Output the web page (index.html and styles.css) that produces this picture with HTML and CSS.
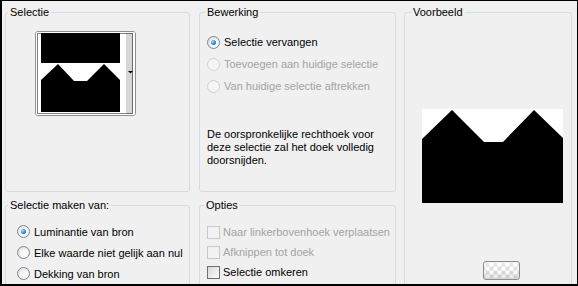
FILE: index.html
```html
<!DOCTYPE html>
<html>
<head>
<meta charset="utf-8">
<link rel="stylesheet" href="styles.css">
</head>
<body>
<div class="frame">
  <div class="layout">
    <fieldset class="group g-sel">
      <legend>Selectie</legend>
      <div class="thumb">
        <svg width="99" height="83" viewBox="0 0 99 83">
          <rect x="0" y="0" width="99" height="83" fill="#fff"/>
          <rect x="90" y="1" width="7" height="81" fill="#d6d6d6"/>
          <rect x="5" y="1" width="79" height="30" fill="#000"/>
          <polygon points="5,48 22,32 38,49 51,49 68,32 84,48 84,80 5,80" fill="#000"/>
          <polygon points="92,39 97,39 94.5,41.5" fill="#000"/>
          <rect x="1.5" y="1.5" width="95" height="80" fill="none" stroke="#000" stroke-width="1" stroke-dasharray="1 1"/>
        </svg>
      </div>
    </fieldset>

    <fieldset class="group g-edit">
      <legend>Bewerking</legend>
      <div class="options opts-edit">
        <div class="opt"><span class="radio checked"></span>Selectie vervangen</div>
        <div class="opt disabled"><span class="radio"></span>Toevoegen aan huidige selectie</div>
        <div class="opt disabled"><span class="radio"></span>Van huidige selectie aftrekken</div>
      </div>
      <p class="note">De oorspronkelijke rechthoek voor<br>deze selectie zal het doek volledig<br>doorsnijden.</p>
    </fieldset>

    <fieldset class="group g-preview">
      <legend>Voorbeeld</legend>
      <div class="preview">
        <svg width="141" height="94" viewBox="0 0 141 94">
          <rect x="0" y="0" width="141" height="94" fill="#fff"/>
          <polygon points="0,30 30,1 62,33 81,33 112,1 141,29 141,94 0,94" fill="#000"/>
        </svg>
      </div>
      <div class="bg-button"></div>
    </fieldset>

    <fieldset class="group g-source">
      <legend>Selectie maken van:</legend>
      <div class="options opts-source">
        <div class="opt"><span class="radio checked"></span>Luminantie van bron</div>
        <div class="opt"><span class="radio"></span>Elke waarde niet gelijk aan nul</div>
        <div class="opt"><span class="radio"></span>Dekking van bron</div>
      </div>
    </fieldset>

    <fieldset class="group g-opts">
      <legend>Opties</legend>
      <div class="options opts-check">
        <div class="opt disabled"><span class="check"></span>Naar linkerbovenhoek verplaatsen</div>
        <div class="opt disabled"><span class="check"></span>Afknippen tot doek</div>
        <div class="opt"><span class="check"></span>Selectie omkeren</div>
      </div>
    </fieldset>
  </div>
</div>
</body>
</html>
```

FILE: styles.css
```css
* { box-sizing: border-box; }

html, body {
  margin: 0;
  padding: 0;
  background: #f0f0f0;
}

body {
  font-family: "Liberation Sans", Arial, sans-serif;
  font-size: 11px;
  color: #000;
}

.frame {
  width: 578px;
  height: 286px;
  border-style: solid;
  border-color: #000;
  border-width: 1px 1px 2px 2px;
  padding: 5px 0 0 3px;
  overflow: hidden;
  background: #f0f0f0;
}

.layout {
  display: grid;
  grid-template-columns: 186px 197px 168px;
  grid-template-rows: 186px 120px;
  column-gap: 8px;
  row-gap: 7px;
}

.group {
  margin: 0;
  padding: 0;
  border: 1px solid #d2dce3;
  border-radius: 3px;
  min-width: 0;
}

.group legend {
  padding: 0 2px;
  line-height: 13px;
  font-size: 11px;
}

.g-sel { grid-column: 1; grid-row: 1; width: 185px; }
.g-sel legend { margin-left: 2px; }

.g-edit { grid-column: 2; grid-row: 1; }
.g-edit legend { margin-left: 5px; }

.g-preview { grid-column: 3; grid-row: 1 / span 2; }
.g-preview legend { margin-left: 6px; }

.g-source { grid-column: 1; grid-row: 2; width: 185px; }
.g-source legend { margin-left: 2px; }

.g-opts { grid-column: 2; grid-row: 2; }
.g-opts legend { margin-left: 4px; }

/* thumbnail list */
.thumb {
  margin: 12px 0 0 29px;
  width: 101px;
  height: 85px;
  border: 1px solid #8e8f8f;
  border-radius: 3px;
  background: #fff;
  overflow: hidden;
}
.thumb svg { display: block; }

/* options */
.options { display: flex; flex-direction: column; }
.opts-edit { padding: 12px 0 0 7px; }
.opts-edit .opt { height: 22px; }
.opts-source { padding: 9px 0 0 11px; }
.opts-source .opt { height: 21px; }
.opts-check { padding: 10px 0 0 7px; }
.opts-check .opt { height: 20px; gap: 3px; }

.opt {
  display: flex;
  align-items: center;
  gap: 4px;
  white-space: nowrap;
}
.opt.disabled { color: #a3a3a3; }

.radio {
  position: relative;
  flex: none;
  width: 13px;
  height: 13px;
  border-radius: 50%;
  border: 1px solid #7d8790;
  background: radial-gradient(circle at 65% 65%, #ffffff 0%, #f3f3f3 45%, #d4d4d4 100%);
}
.radio.checked::after {
  content: "";
  position: absolute;
  left: 3px;
  top: 3px;
  width: 5px;
  height: 5px;
  border-radius: 50%;
  background: radial-gradient(circle at 35% 35%, #9fdcff 0%, #2a8ad6 55%, #0c5596 100%);
}
.disabled .radio {
  border-color: #d0d0d0;
  background: #f5f5f5;
}

.check {
  flex: none;
  width: 13px;
  height: 13px;
  border: 1px solid #6f6f6f;
  background: linear-gradient(135deg, #d9d9d9 0%, #eeeeee 60%, #ffffff 100%);
}
.disabled .check {
  border-color: #c8c8c8;
  background: #f2f2f2;
}

.note {
  margin: 31px 0 0 7px;
  line-height: 13px;
}

/* preview */
.preview {
  margin: 90px 0 0 17px;
  width: 141px;
  height: 94px;
}
.preview svg { display: block; }

.bg-button {
  margin: 58px 0 0 78px;
  width: 37px;
  height: 19px;
  border: 1px solid #8a8a8a;
  border-radius: 3px;
  background:
    linear-gradient(to bottom, rgba(255,255,255,0.55) 0%, rgba(255,255,255,0.2) 50%, rgba(190,190,190,0.45) 100%),
    repeating-conic-gradient(#ffffff 0 25%, #d2d2d2 0 50%) 50% 50% / 8px 8px;
}
```
